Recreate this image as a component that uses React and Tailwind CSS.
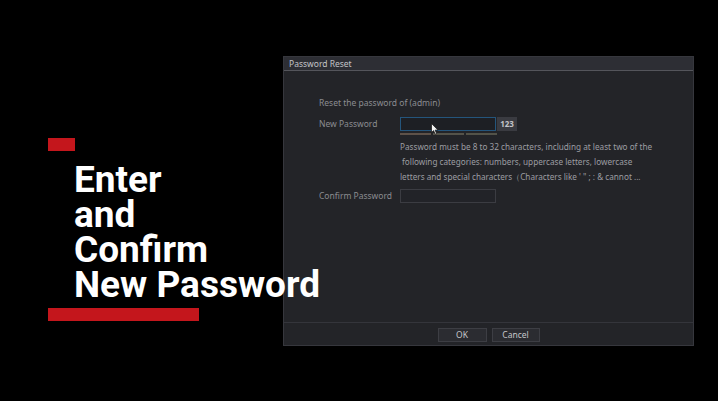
import React from 'react';

const ui = { fontFamily: '"Noto Sans", "Open Sans", sans-serif' };

const Field = ({ label, focused, children }) => (
  <div className="flex items-center h-[14px]">
    <div className="w-[81px] shrink-0 text-[8.5px] text-[#8b8c91] leading-[14px]">{label}</div>
    <div
      className={`relative w-[96px] h-[14px] border ${
        focused ? 'border-[#24557c] bg-[#1d1f24]' : 'border-[#3b3c42] bg-[#222328]'
      }`}
    >
      {children}
    </div>
    {focused && (
      <div className="ml-[1px] h-[14px] w-[20px] flex items-center justify-center bg-[#3a3b41] text-[8px] font-bold text-[#c3c4c8]">
        123
      </div>
    )}
  </div>
);

const Cursor = () => (
  <svg className="absolute left-[30px] top-[5px]" width="8" height="12" viewBox="0 0 8 12">
    <path d="M0.5 0.5 L0.5 9.5 L2.6 7.6 L4.2 11.2 L5.6 10.6 L4.1 7.1 L7 7.1 Z" fill="#f2f2f2" stroke="#111" strokeWidth="0.7" />
  </svg>
);

const App = () => {
  return (
    <div className="w-[718px] h-[401px] bg-black flex overflow-hidden">
      {/* left title block */}
      <div className="relative z-10 w-[283px] shrink-0 pl-[48px] pt-[138px]">
        <div className="w-[27px] h-[13px] bg-[#c4161c]" />
        <div
          className="mt-[11px] ml-[26px] text-white font-bold text-[37px] leading-[35px] whitespace-nowrap"
          style={{ fontFamily: 'Roboto, "Liberation Sans", sans-serif' }}
        >
          <div>Enter</div>
          <div>and</div>
          <div>Confirm</div>
          <div>New Password</div>
        </div>
        <div className="mt-[6px] w-[151px] h-[13px] bg-[#c4161c]" />
      </div>

      {/* dialog */}
      <div
        className="mt-[56px] w-[411px] h-[290px] flex flex-col bg-[#232428] border border-[#36373d]"
        style={ui}
      >
        <div className="h-[14px] shrink-0 box-border border-b border-[#54555b] bg-[#2d2e34] pl-[5px] text-[8.5px] leading-[13px] text-[#c2c3c7]">
          Password Reset
        </div>

        <div className="flex-1 pl-[35px] pt-[26px]">
          <div className="h-[12px] text-[8.5px] leading-[12px] text-[#8b8c91]">Reset the password of (admin)</div>

          <div className="mt-[8px]">
            <Field label="New Password" focused>
              <Cursor />
            </Field>
          </div>

          <div className="ml-[81px] mt-[2px] flex gap-[2px]">
            <div className="w-[31px] h-[2px] bg-[#5e5249]" />
            <div className="w-[31px] h-[2px] bg-[#54534a]" />
            <div className="w-[31px] h-[2px] bg-[#535349]" />
          </div>

          <div className="ml-[81px] mt-[4px] w-[260px] text-[8.2px] leading-[15px] text-[#9c9da2] whitespace-nowrap">
            <div>Password must be 8 to 32 characters, including at least two of the</div>
            <div className="pl-[2px]">following categories: numbers, uppercase letters, lowercase</div>
            <div>letters and special characters（Characters like ' " ; : &amp; cannot ...</div>
          </div>

          <div className="mt-[5px]">
            <Field label="Confirm Password" />
          </div>
        </div>

        <div className="shrink-0 border-t border-[#34353b] pt-[5px] pb-[3px] flex justify-center gap-[5px]">
          <button className="w-[49px] h-[14px] bg-[#2b2c31] border border-[#3d3e44] text-[8.5px] leading-[12px] text-[#c5c6ca]">
            OK
          </button>
          <button className="w-[48px] h-[14px] bg-[#2b2c31] border border-[#3d3e44] text-[8.5px] leading-[12px] text-[#c5c6ca]">
            Cancel
          </button>
        </div>
      </div>
    </div>
  );
};

export default App;
